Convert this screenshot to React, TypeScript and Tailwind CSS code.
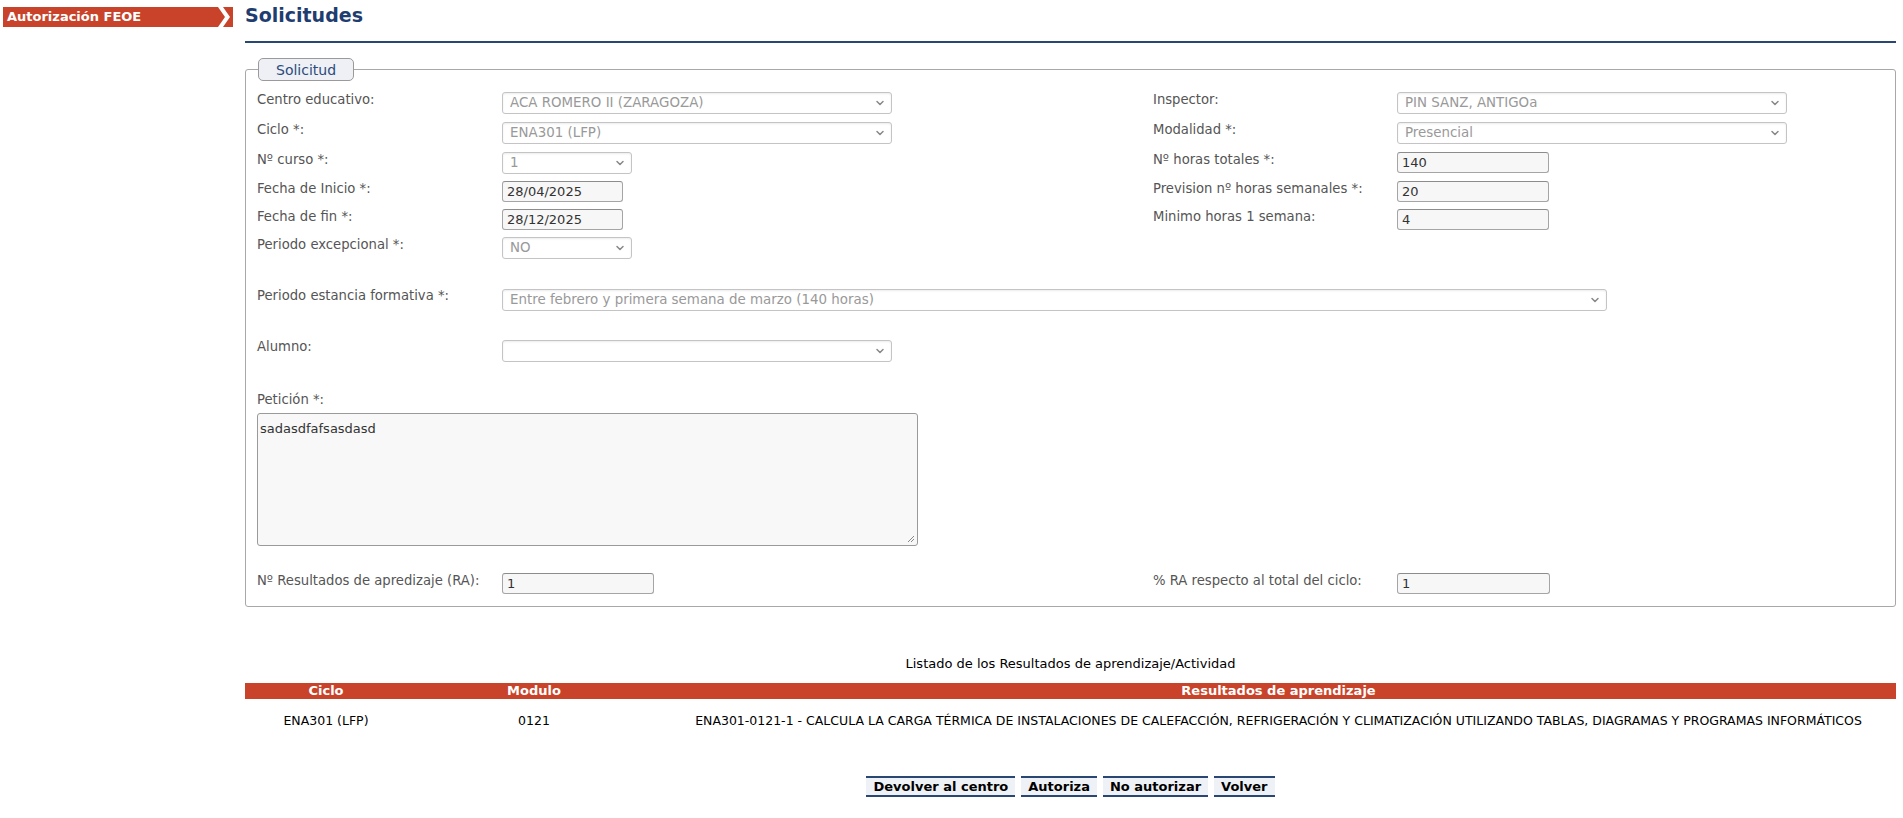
import { ChevronDown } from 'lucide-react';
import type { ReactNode } from 'react';

const font = "font-['DejaVu_Sans',Verdana,sans-serif]";
const label = 'text-[13.2px] leading-4 text-[#555]';

function Select({ value, width }: { value: string; width: string }) {
  return (
    <div
      className={`${width} h-[22px] flex items-center justify-between pl-[7px] pr-[5px] bg-white border border-[#c4c4c4] rounded-[3px] shadow-[inset_0_1px_2px_rgba(0,0,0,0.08)]`}
    >
      <span className="text-[13.4px] leading-4 text-[#999] truncate">{value}</span>
      <ChevronDown size={12} strokeWidth={3} className="text-[#888] shrink-0" />
    </div>
  );
}

function Input({ value, width }: { value: string; width: string }) {
  return (
    <div
      className={`${width} h-[21px] flex items-center px-[4px] bg-[#f7f7f7] border border-[#a5a5a5] border-t-[#8c8c8c] rounded-[3px]`}
    >
      <span className="text-[13px] leading-4 text-[#333]">{value}</span>
    </div>
  );
}

function Row({ h, l1, c1, l2, c2 }: { h: string; l1: string; c1: ReactNode; l2?: string; c2?: ReactNode }) {
  return (
    <div className={`grid grid-cols-[245px_651px_244px_1fr] ${h}`}>
      <span className={label}>{l1}</span>
      <div>{c1}</div>
      <span className={label}>{l2}</span>
      <div>{c2}</div>
    </div>
  );
}

const cols = [
  { name: 'Ciclo', w: 'w-[162px]' },
  { name: 'Modulo', w: 'w-[254px]' },
  { name: 'Resultados de aprendizaje', w: '' },
];

export default function App() {
  return (
    <div className={`${font} flex min-h-screen bg-white`}>
      <aside className="w-[245px] shrink-0 pt-[7px] pl-[3px]">
        <div className="w-[230px] h-[20px] flex items-center justify-between bg-[#c8432a]">
          <span className="pl-[4px] text-[13px] font-bold text-white leading-4">Autorización FEOE</span>
          <svg width="15" height="20" viewBox="0 0 15 20" aria-hidden>
            <polygon points="0,0 5,0 12,10 5,20 0,20 7,10" fill="#ffffff" />
          </svg>
        </div>
      </aside>

      <main className="w-[1651px] shrink-0">
        <div className="h-[43px] border-b-2 border-[#2a4673]">
          <h1 className="pt-[3px] text-[19px] leading-6 font-bold text-[#1f3d70]">Solicitudes</h1>
        </div>

        <fieldset className="mt-[15px] border border-[#a8a8a8] rounded-[3px] pl-[11px] pt-[11px] pb-[11px]">
          <legend className="ml-px h-[23px] flex items-center px-[17px] bg-[#eef0f5] border border-[#9a9a9a] rounded-[5px] text-[14px] leading-4 text-[#2b4b7c]">
            Solicitud
          </legend>

          <Row
            h="h-[30px]"
            l1="Centro educativo:"
            c1={<Select value="ACA ROMERO II (ZARAGOZA)" width="w-[390px]" />}
            l2="Inspector:"
            c2={<Select value="PIN SANZ, ANTIGOa" width="w-[390px]" />}
          />
          <Row
            h="h-[30px]"
            l1="Ciclo *:"
            c1={<Select value="ENA301 (LFP)" width="w-[390px]" />}
            l2="Modalidad *:"
            c2={<Select value="Presencial" width="w-[390px]" />}
          />
          <Row
            h="h-[29px]"
            l1="Nº curso *:"
            c1={<Select value="1" width="w-[130px]" />}
            l2="Nº horas totales *:"
            c2={<Input value="140" width="w-[152px]" />}
          />
          <Row
            h="h-[28px]"
            l1="Fecha de Inicio *:"
            c1={<Input value="28/04/2025" width="w-[121px]" />}
            l2="Prevision nº horas semanales *:"
            c2={<Input value="20" width="w-[152px]" />}
          />
          <Row
            h="h-[28px]"
            l1="Fecha de fin *:"
            c1={<Input value="28/12/2025" width="w-[121px]" />}
            l2="Minimo horas 1 semana:"
            c2={<Input value="4" width="w-[152px]" />}
          />
          <Row h="h-[51px]" l1="Periodo excepcional *:" c1={<Select value="NO" width="w-[130px]" />} />

          <div className="grid grid-cols-[245px_1fr] h-[51px]">
            <span className={label}>Periodo estancia formativa *:</span>
            <div className="pt-px">
              <Select value="Entre febrero y primera semana de marzo (140 horas)" width="w-[1105px]" />
            </div>
          </div>

          <div className="grid grid-cols-[245px_1fr] h-[53px]">
            <span className={label}>Alumno:</span>
            <div className="pt-px">
              <Select value="" width="w-[390px]" />
            </div>
          </div>

          <div className="flex flex-col gap-[5px]">
            <span className={label}>Petición *:</span>
            <div className="w-[661px] h-[133px] relative bg-[#f8f8f8] border border-[#9a9a9a] rounded-[3px] px-[2px] py-[2px]">
              <span className="text-[13px] leading-4 text-[#333]">sadasdfafsasdasd</span>
              <svg width="8" height="8" viewBox="0 0 8 8" className="absolute right-[2px] bottom-[2px]" aria-hidden>
                <path d="M7 1 1 7M7 4 4 7" stroke="#888" strokeWidth="1" />
              </svg>
            </div>
          </div>

          <div className="mt-[27px]">
            <Row
              h="h-[22px]"
              l1="Nº Resultados de apredizaje (RA):"
              c1={<Input value="1" width="w-[152px]" />}
              l2="% RA respecto al total del ciclo:"
              c2={<Input value="1" width="w-[153px]" />}
            />
          </div>
        </fieldset>

        <p className="mt-[49px] text-center text-[13px] leading-4 text-black">
          Listado de los Resultados de aprendizaje/Actividad
        </p>

        <table className="mt-[11px] w-full table-fixed border-collapse text-[12.5px] leading-4">
          <thead>
            <tr className="bg-[#c8432a] h-[16px]">
              {cols.map((c) => (
                <th key={c.name} className={`${c.w} p-0 text-[13px] font-bold text-white text-center`}>
                  {c.name}
                </th>
              ))}
            </tr>
          </thead>
          <tbody>
            <tr className="text-black text-center">
              <td className="py-[14px]">ENA301 (LFP)</td>
              <td className="py-[14px]">0121</td>
              <td className="py-[14px]">
                ENA301-0121-1 - CALCULA LA CARGA TÉRMICA DE INSTALACIONES DE CALEFACCIÓN, REFRIGERACIÓN Y CLIMATIZACIÓN UTILIZANDO TABLAS, DIAGRAMAS Y PROGRAMAS INFORMÁTICOS
              </td>
            </tr>
          </tbody>
        </table>

        <div className="mt-[33px] flex justify-center gap-[6px]">
          {['Devolver al centro', 'Autoriza', 'No autorizar', 'Volver'].map((b) => (
            <button
              key={b}
              type="button"
              className="h-[21px] px-[7px] bg-[#eef1f6] border-y-2 border-[#2a4673] text-[13px] font-bold leading-4 text-black"
            >
              {b}
            </button>
          ))}
        </div>
      </main>
    </div>
  );
}
